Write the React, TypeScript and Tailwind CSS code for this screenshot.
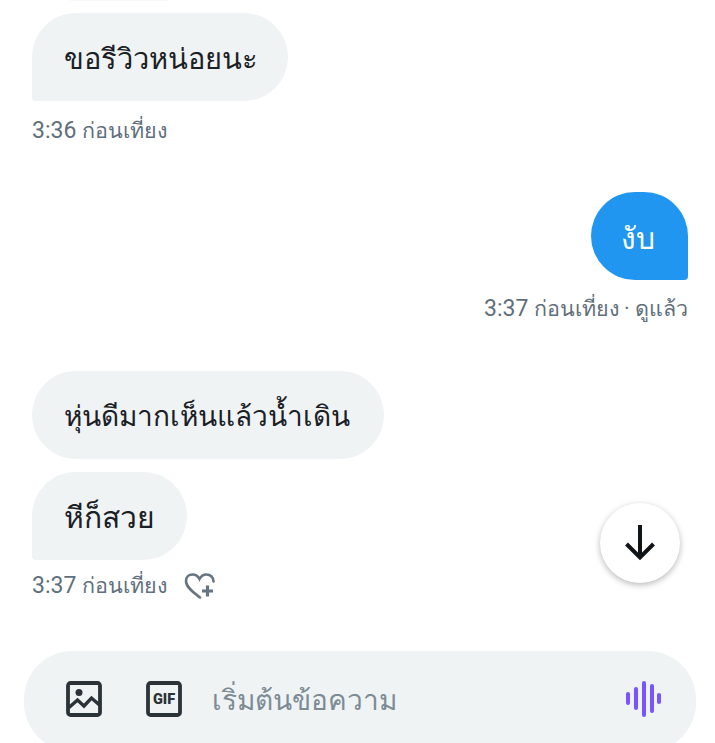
const font = "font-['Roboto','Noto_Sans','Noto_Sans_CJK_SC',sans-serif]";

function ImageIcon() {
  return (
    <svg width="36" height="36" viewBox="0 0 36 36" fill="none">
      <rect x="2" y="2" width="32" height="32" rx="2.5" stroke="#2b3338" strokeWidth="3.8" />
      <circle cx="13" cy="11.500" r="3.500" fill="#2b3338" />
      <path d="M3 26.500l8.500-7.500 6.500 6 7.500-8 8 7" stroke="#2b3338" strokeWidth="3.400" />
    </svg>
  );
}

function GifIcon() {
  return (
    <svg width="36" height="36" viewBox="0 0 36 36" fill="none">
      <rect x="2" y="2" width="32" height="32" rx="2.5" stroke="#2b3338" strokeWidth="3.8" />
      <text x="18" y="23" textAnchor="middle" fontSize="14.500" fontWeight="900" fontFamily="Roboto" fill="#2b3338">GIF</text>
    </svg>
  );
}

function HeartPlus() {
  return (
    <svg width="32" height="28" viewBox="0 0 32 28" fill="none" stroke="#66757f">
      <path d="M16 25.500C10 21 2 15.500 2 9c0-4 3-6.500 6.500-6.500 3 0 5.500 1.500 7 4.500 1.500-3 4-4.500 7-4.500 4 0 7 3 7 7" strokeWidth="2.600" strokeLinecap="round" />
      <path d="M23.500 13.500v11M18 19h11" strokeWidth="3.200" />
    </svg>
  );
}

function Wave() {
  return (
    <svg width="36" height="36" viewBox="0 0 36 36" fill="#7856ff">
      <rect x="0" y="11" width="4" height="13" rx="2" />
      <rect x="8" y="6" width="4" height="23" rx="2" />
      <rect x="16" y="0" width="4" height="36" rx="2" />
      <rect x="24" y="3" width="4" height="29" rx="2" />
      <rect x="31" y="12" width="4" height="11" rx="2" />
    </svg>
  );
}

function Stamp({ time, rest }: { time: string; rest: string }) {
  return (
    <span className="text-[21.5px] leading-[28px] text-[#5f6f7b]">
      <span className="text-[23px]">{time}</span> {rest}
    </span>
  );
}

export default function App() {
  return (
    <div className={`relative h-[743px] w-[715px] overflow-hidden bg-white ${font}`}>
      <div className="ml-[70px] h-px w-[98px] bg-[#f7f8f9]" />

      {/* messages */}
      <div className="pl-[32px] pr-[27px] pt-[12px]">
        <div className="flex h-[88px] w-[256px] items-center whitespace-nowrap rounded-[44px] rounded-bl-[4px] bg-[#eff3f4] px-[32px] pt-[5px] text-[29px] text-[#1a2025]">
          ขอรีวิวหน่อยนะ
        </div>
        <div className="mt-[16px] h-[28px]">
          <Stamp time="3:36" rest="ก่อนเที่ยง" />
        </div>

        <div className="mt-[47px] flex flex-col items-end">
          <div className="flex h-[88px] w-[97px] items-center justify-center rounded-[44px] rounded-br-[4px] bg-[#2196f0] pr-[4px] pt-[4px] text-[30px] text-white">
            งับ
          </div>
          <div className="mt-[15px] h-[28px]">
            <Stamp time="3:37" rest="ก่อนเที่ยง · ดูแล้ว" />
          </div>
        </div>

        <div className="mt-[48px] flex h-[88px] w-[352px] items-center whitespace-nowrap rounded-[44px] bg-[#eff3f4] px-[32px] pt-[4px] text-[28px] text-[#1a2025]">
          หุ่นดีมากเห็นแล้วน้ำเดิน
        </div>
        <div className="mt-[13px] flex h-[88px] w-[155px] items-center whitespace-nowrap rounded-[44px] rounded-bl-[4px] bg-[#eff3f4] px-[32px] pt-[2px] text-[30px] text-[#1a2025]">
          หีก็สวย
        </div>
        <div className="mt-[12px] flex h-[28px] items-center gap-[17px]">
          <Stamp time="3:37" rest="ก่อนเที่ยง" />
          <HeartPlus />
        </div>
      </div>

      {/* composer */}
      <div className="ml-[24px] mt-[51px] flex h-[100px] w-[672px] items-center rounded-[48px] bg-[#eff3f4] pb-[4px] pl-[42px] pr-[34px]">
        <ImageIcon />
        <div className="ml-[44px]">
          <GifIcon />
        </div>
        <span className="ml-[30px] flex-1 whitespace-nowrap pt-[4px] text-[28px] text-[#7d8b95]">เริ่มต้นข้อความ</span>
        <Wave />
      </div>

      {/* scroll to bottom */}
      <button className="absolute left-[600px] top-[503px] flex h-[80px] w-[80px] items-center justify-center rounded-full bg-white shadow-[0_2px_6px_rgba(0,0,0,0.28)]">
        <svg width="32" height="36" viewBox="0 0 32 36" fill="none" stroke="#0f1419" strokeWidth="4">
          <path d="M16 0v32M2.500 19 16 32.500 29.500 19" />
        </svg>
      </button>
    </div>
  );
}
